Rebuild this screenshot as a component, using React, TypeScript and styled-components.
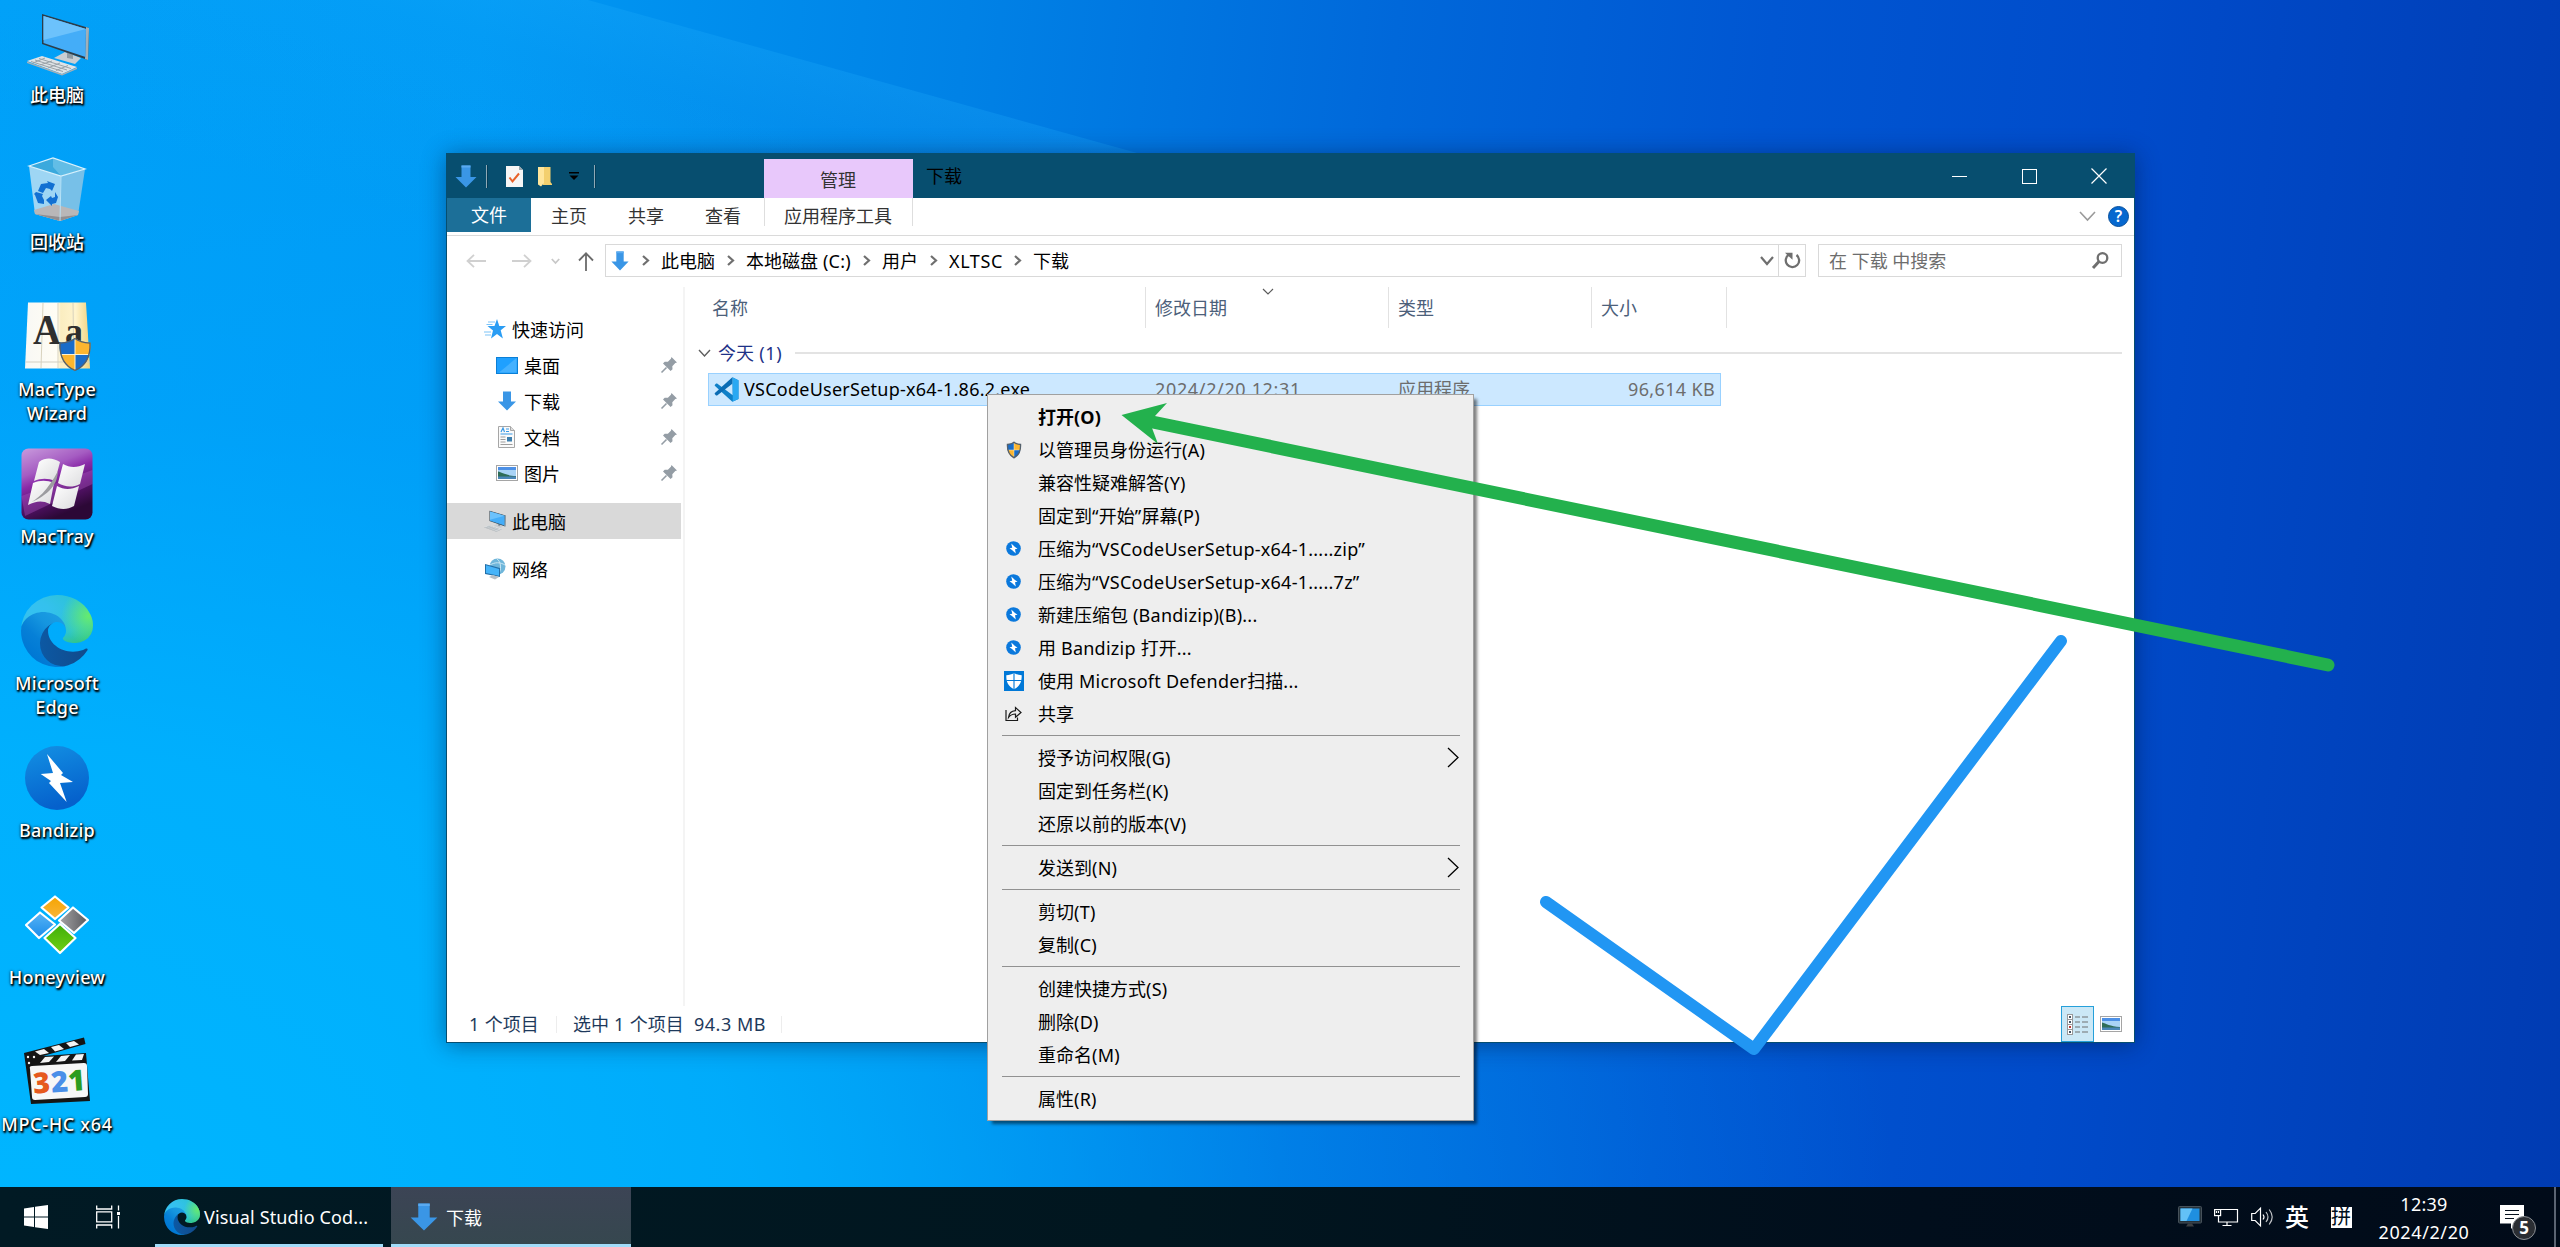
import React from 'react';
import styled, { createGlobalStyle, css } from 'styled-components';

const FONT = `"Noto Sans", "Noto Sans CJK SC", sans-serif`;

const Global = createGlobalStyle`
  html, body { margin: 0; padding: 0; }
  body { font-family: ${FONT}; font-size: 18px; color: #000; overflow: hidden; }
  * { box-sizing: border-box; }
  svg { display: block; flex: none; overflow: visible; }
`;

/* ---------- text ---------- */

const Latin = styled.span<{ $track: number }>`
  letter-spacing: ${(p) => p.$track}px;
`;

function Txt({ children, track = 0.25 }: { children: string; track?: number }) {
  const runs = children.split(/([\u2e80-\u9fff]+)/).filter(Boolean);
  return (
    <>
      {runs.map((r, i) =>
        /[\u2e80-\u9fff]/.test(r) ? <React.Fragment key={i}>{r}</React.Fragment> : <Latin key={i} $track={track}>{r}</Latin>
      )}
    </>
  );
}

/* ---------- desktop ---------- */

const Screen = styled.div`
  display: flex;
  flex-direction: column;
  width: 2560px;
  height: 1247px;
  overflow: hidden;
  background:
    radial-gradient(ellipse 2000px 1300px at 0% 100%, rgba(0, 182, 255, 1) 0%, rgba(0, 180, 255, 0.8) 38%, rgba(0, 170, 255, 0.35) 65%, rgba(0, 160, 255, 0) 95%),
    linear-gradient(96deg, #00a0f8 0%, #0099f4 18%, #0082e6 36%, #0068da 52%, #0056d2 66%, #004bca 80%, #0041bb 92%, #003bb2 100%);
`;

const Workspace = styled.main`
  position: relative;
  flex: 1;
  overflow: hidden;
`;

const Rays = styled.svg`
  position: absolute;
  inset: 0;
`;

const IconColumn = styled.div`
  position: relative;
  display: flex;
  flex-direction: column;
  width: 114px;
`;

const DesktopItem = styled.div`
  display: flex;
  flex-direction: column;
  align-items: center;
  gap: 4px;
  height: 147px;
  padding-top: 7px;
`;

const DesktopLabel = styled.div`
  color: #fff;
  font-weight: 500;
  line-height: 24px;
  text-align: center;
  white-space: pre;
  text-shadow: 1px 1px 2px #000, 1px 2px 2px #000, 0 0 3px rgba(0, 0, 0, 0.6);
`;

const PcIcon = ({ size = 72, box = '0 0 72 72' }: { size?: number; box?: string }) => (
  <svg width={size} height={size} viewBox={box}>
    <polygon points="33,51 44,45 60,51 54,57" fill="#c9ced2" />
    <polygon points="46,42 52,44 52,52 46,51" fill="#8f9ba3" />
    <polygon points="21,7 68,21 67,53 21,37" fill="#2d3d49" />
    <polygon points="65,20 68,21 67,53 64,52" fill="#9fb0ba" />
    <polygon points="22.5,9 65,22 64.5,50 22.5,36" fill="#44adf8" />
    <polygon points="22.5,9 65,22 22.5,33" fill="#6cc2fc" />
    <polygon points="6,54 21,49 56,60 41,67" fill="#dfe3e6" />
    <path d="M10 54.5l32 10M14 53l32 10M18 51.500l32 10M12 56l12-5M19 58l12-4M27 61l12-5M35 63.500l12-5" stroke="#9aa3a9" strokeWidth="1" fill="none" />
    <path d="M6 54.500l35 12.500 15-6.500v1.500l-15 6.500-35-12.500z" fill="#a8b0b5" />
  </svg>
);

const BinIcon = () => (
  <svg width="72" height="72" viewBox="0 0 72 72">
    <polygon points="8,12 40,22 39,67 14,60" fill="#9ed6f4" />
    <polygon points="40,22 64,15 57,61 39,67" fill="#77c0e8" />
    <polygon points="8,12 32,4 64,15 40,22" fill="#3aa9dd" />
    <polygon points="32,4 64,15 40,22 32,13" fill="#62bde6" />
    <polygon points="13,56 33,50 58,57 57,61 39,67 14,60" fill="#b9b7b8" />
    <polygon points="14,60 39,67 57,61 39,63" fill="#918e90" />
    <path d="M8 12l24-8 32 11-24 7z" fill="none" stroke="#d8f1fc" strokeWidth="1.200" />
    <path d="M40 22l-1 45" stroke="#b9e2f6" strokeWidth="1" />
    <g fill="#1170d2">
      <path d="M17 37l3-7 7-1-1-2 8 3-3 7-2-2-4-1-3 5z" />
      <path d="M15 38l7 2-1 2 2 4 0 4-6-1-3-8-1-1z" />
      <path d="M25 46l5-4 1 2 3-1 0-5 3 5-2 6-4 1 0 2z" />
    </g>
  </svg>
);

const UacShield = ({ x = 0, y = 0, w = 32, h = 32 }) => (
  <svg x={x} y={y} width={w} height={h} viewBox="0 0 32 32" preserveAspectRatio="none">
    <defs>
      <clipPath id="uac">
        <path d="M16 0c4 3 9 4 15.500 4.500C32 16 29 26 16 32 3 26 0 16 .5 4.500 7 4 12 3 16 0z" />
      </clipPath>
    </defs>
    <g clipPath="url(#uac)">
      <rect width="16" height="16" fill="#1a6cc8" />
      <rect x="16" width="16" height="16" fill="#fdb62f" />
      <rect y="16" width="16" height="16" fill="#fdb62f" />
      <rect x="16" y="16" width="16" height="16" fill="#1a6cc8" />
      <path d="M16 0v32M0 16h32" stroke="#fff3d0" strokeWidth="1" />
    </g>
    <path d="M16 .5c4 3 9 4 15 4.500C31.500 16 28.500 26 16 31.500 3.500 26 .5 16 1 5 7 4.500 12 3.500 16 .5z" fill="none" stroke="#54606c" strokeWidth={w < 20 ? 3 : 1.3} />
  </svg>
);

const MacTypeIcon = () => (
  <svg width="72" height="72" viewBox="0 0 72 72">
    <defs>
      <linearGradient id="mt" x1="0" x2="1">
        <stop offset="0" stopColor="#f8f8f5" />
        <stop offset=".5" stopColor="#fffdf4" />
        <stop offset=".55" stopColor="#faedc0" />
        <stop offset=".78" stopColor="#fff4cd" />
        <stop offset="1" stopColor="#f0d27d" />
      </linearGradient>
    </defs>
    <polygon points="7,1.500 65,1.500 69,67.500 4,67.500" fill="url(#mt)" />
    <path d="M22 2l-2 65M37 2v65M52 2l1 65" stroke="#d9d3be" strokeWidth="1" />
    <path d="M4.500 61h64" stroke="#d2cfc2" strokeWidth="1" />
    <g fill="#2f2f2f" fontFamily="Liberation Serif, serif" fontWeight="700">
      <text x="12" y="43" fontSize="42" textLength="28" lengthAdjust="spacingAndGlyphs">A</text>
      <text x="44" y="43" fontSize="38" textLength="18" lengthAdjust="spacingAndGlyphs">a</text>
    </g>
    <UacShield x={38} y={37} w={32} h={33} />
  </svg>
);

const MacTrayIcon = () => (
  <svg width="72" height="72" viewBox="0 0 72 72">
    <defs>
      <linearGradient id="tray" x1="0" y1="0" x2=".4" y2="1">
        <stop offset="0" stopColor="#c99bdd" />
        <stop offset=".35" stopColor="#a55cc2" />
        <stop offset=".5" stopColor="#8a2ba8" />
        <stop offset=".72" stopColor="#5a1470" />
        <stop offset="1" stopColor="#2c0836" />
      </linearGradient>
      <linearGradient id="pane" x1="0" y1="0" x2="1" y2="1">
        <stop offset="0" stopColor="#ffffff" />
        <stop offset="1" stopColor="#dcdcde" />
      </linearGradient>
    </defs>
    <rect x=".5" y=".5" width="71" height="71" rx="7" fill="url(#tray)" />
    <path d="M0.500 48L71.500 22v14L4 68z" fill="#b45ccc" opacity=".35" />
    <g fill="url(#pane)">
      <path d="M18 14c7-5 14-4 21 0l-5 19c-7-3-14-3-21 0z" />
      <path d="M42 16c7 4 14 4 22 0l-5 20c-8 4-15 3-22-1z" />
      <path d="M12 35c7-3 14-3 21 0l-4 21c-8-4-14-3-22 1z" />
      <path d="M36 38c7 4 14 4 22 0l-5 20c-7 4-14 4-22 0z" />
    </g>
    <path d="M7 56C16 52 27 42 37 23c-1 9-2 12-8 19C22 49 15 52 7 56z" fill="#9c9ca0" />
  </svg>
);

const EdgeIcon = ({ size = 72, uid }: { size?: number; uid: string }) => (
  <svg width={size} height={size} viewBox="0 0 256 256">
    <defs>
      <linearGradient id={uid + 'a'} x1="63" y1="178" x2="241" y2="178" gradientUnits="userSpaceOnUse">
        <stop offset="0" stopColor="#0c59a4" />
        <stop offset="1" stopColor="#114a8b" />
      </linearGradient>
      <linearGradient id={uid + 'b'} x1="157" y1="100" x2="46" y2="220" gradientUnits="userSpaceOnUse">
        <stop offset="0" stopColor="#1b9de2" />
        <stop offset=".3" stopColor="#1595df" />
        <stop offset=".65" stopColor="#0680d7" />
        <stop offset="1" stopColor="#0078d4" />
      </linearGradient>
      <radialGradient id={uid + 'c'} cx="0" cy="0" r="1" gradientTransform="matrix(-8 170 -350 -20 30 48)" gradientUnits="userSpaceOnUse">
        <stop offset="0" stopColor="#35c1f1" />
        <stop offset=".2" stopColor="#34c1ed" />
        <stop offset=".4" stopColor="#2fc2df" />
        <stop offset=".6" stopColor="#2bc3d2" />
        <stop offset="1" stopColor="#36c752" />
      </radialGradient>
      <radialGradient id={uid + 'd'} cx="240" cy="75" r="97" gradientUnits="userSpaceOnUse">
        <stop offset="0" stopColor="#66eb6e" />
        <stop offset="1" stopColor="#66eb6e" stopOpacity="0" />
      </radialGradient>
    </defs>
    <path fill={`url(#${uid}a)`} d="M231 190.500c-3.400 1.800-6.900 3.400-10.500 4.700a101.900 101.900 0 0 1-35.900 6.500c-47.300 0-88.500-32.500-88.500-74.300a31.500 31.500 0 0 1 16.400-27.300c-42.800 1.800-53.800 46.400-53.800 72.500 0 73.900 68 81.400 82.700 81.400 7.900 0 19.800-2.300 27-4.600l1.300-.4a128.300 128.300 0 0 0 66.600-52.800 4 4 0 0 0-5.300-5.700z" />
    <path fill={`url(#${uid}b)`} d="M105.700 241.400a79.200 79.200 0 0 1-22.700-21.300 80.700 80.700 0 0 1 29.500-120c3.200-1.500 8.500-4.100 15.600-4a32.400 32.400 0 0 1 25.700 13 31.900 31.900 0 0 1 6.300 18.700c0-.2 24.500-79.600-80-79.600-43.900 0-80 41.700-80 78.200a130.200 130.200 0 0 0 12.100 56 128 128 0 0 0 156.400 67.100 75.500 75.500 0 0 1-62.800-8z" />
    <path fill={`url(#${uid}c)`} d="M152.300 148.900c-.8 1-3.300 2.500-3.300 5.700 0 2.600 1.700 5.100 4.700 7.200 14.400 10 41.500 8.700 41.600 8.700a59.600 59.600 0 0 0 30.300-8.300 61.400 61.400 0 0 0 30.400-52.900c.3-22.400-8-37.300-11.300-43.900C223.500 23.900 177.700 0 128 0A128 128 0 0 0 0 126.200c.5-36.500 36.800-66 80-66 3.500 0 23.500.3 42 10a72.600 72.600 0 0 1 30.900 29.300c6.100 10.600 7.200 24.100 7.200 29.500s-2.700 13.300-7.800 19.900z" />
    <path fill={`url(#${uid}d)`} d="M152.300 148.900c-.8 1-3.300 2.500-3.300 5.700 0 2.600 1.700 5.100 4.700 7.200 14.400 10 41.500 8.700 41.600 8.700a59.600 59.600 0 0 0 30.300-8.300 61.400 61.400 0 0 0 30.400-52.900c.3-22.400-8-37.300-11.300-43.900C223.500 23.900 177.700 0 128 0A128 128 0 0 0 0 126.200c.5-36.500 36.800-66 80-66 3.500 0 23.500.3 42 10a72.600 72.600 0 0 1 30.900 29.300c6.100 10.600 7.200 24.100 7.200 29.500s-2.700 13.300-7.800 19.900z" />
  </svg>
);

const BandizipIcon = () => (
  <svg width="72" height="72" viewBox="0 0 72 72">
    <defs>
      <linearGradient id="bz" x1="0" y1="0" x2=".3" y2="1">
        <stop offset="0" stopColor="#1391e4" />
        <stop offset="1" stopColor="#0561cc" />
      </linearGradient>
    </defs>
    <circle cx="36" cy="36" r="32" fill="url(#bz)" />
    <polygon points="26,12 42,31 40,33 52,40 39,41 45.700,60 28,41 30,39 19.700,32 32,31" fill="#fff" />
  </svg>
);

const HoneyviewIcon = () => (
  <svg width="72" height="72" viewBox="0 0 72 72">
    <defs>
      <linearGradient id="ho" x1="0" y1="0" x2="0" y2="1"><stop offset="0" stopColor="#f5a400" /><stop offset="1" stopColor="#f9b53a" /></linearGradient>
      <linearGradient id="hb" x1="0" y1="0" x2="0" y2="1"><stop offset="0" stopColor="#57b4f5" /><stop offset="1" stopColor="#1a8bea" /></linearGradient>
      <linearGradient id="hg" x1="0" y1="0" x2="1" y2="0"><stop offset="0" stopColor="#a4a4a6" /><stop offset="1" stopColor="#59595d" /></linearGradient>
      <linearGradient id="hn" x1="0" y1="0" x2="0" y2="1"><stop offset="0" stopColor="#3fae0a" /><stop offset="1" stopColor="#6fd013" /></linearGradient>
    </defs>
    <g stroke="#fff" strokeWidth="2.200" strokeLinejoin="round">
      <polygon points="34,7.500 47.500,18.500 34,30 20.500,18.500" fill="url(#ho)" />
      <polygon points="19,23.500 34,35.500 18,49 5,36" fill="url(#hb)" />
      <polygon points="52,18.500 67,31 53,44 38,31.500" fill="url(#hg)" />
      <polygon points="39,35 54.500,49 39,64 23.500,49" fill="url(#hn)" />
    </g>
  </svg>
);

const MpcIcon = () => (
  <svg width="72" height="72" viewBox="0 0 72 72">
    <polygon points="3,17 63,1.500 64.500,8 22,20 65,17 69,65 10,68" fill="#151515" />
    <g fill="#f4f4f4">
      <polygon points="14,15.500 23,13 28,17 19,19" />
      <polygon points="30,11 38,9 43,13 34,15.500" />
      <polygon points="45,7 53,5 58,8.500 49,11" />
      <polygon points="24,21 33,20.500 28,26 19,27" />
      <polygon points="40,20 49,19 44,25 35,26" />
      <polygon points="55,18.500 63,18 61,24 51,24.500" />
      <circle cx="7" cy="21" r="1.200" />
      <circle cx="13" cy="21" r="1.200" />
      <circle cx="8" cy="27" r="1.200" />
    </g>
    <path d="M9 33q-1-3 2-3l52-3q3 0 3 3l1 28q0 3-3 3l-50 3q-3 0-3-3z" fill="#f7f7f7" />
    <g fontFamily="Open Sans, sans-serif" fontWeight="800" fontSize="29" transform="rotate(-4 38 46)">
      <text x="12" y="56" fill="#e6591d">3</text>
      <text x="30" y="56" fill="#4a8fe8">2</text>
      <text x="47" y="56" fill="#2c9c1f">1</text>
    </g>
  </svg>
);

/* ---------- explorer window ---------- */

const Explorer = styled.section`
  position: absolute;
  left: 446px;
  top: 153px;
  width: 1689px;
  height: 890px;
  display: flex;
  flex-direction: column;
  background: #fff;
  border: 1px solid #064e70;
  box-shadow: 0 2px 22px rgba(0, 20, 60, 0.45);
`;

const TitleBar = styled.header`
  display: flex;
  height: 44px;
  background: #074e6f;
`;

const QuickAccess = styled.div`
  display: flex;
  align-items: center;
  width: 317px;
  padding-left: 8px;
`;

const ToolDivider = styled.i<{ $ml: number; $mr: number }>`
  width: 2px;
  height: 23px;
  margin: 0 ${(p) => p.$mr}px 0 ${(p) => p.$ml}px;
  border-left: 1px solid #8fa9b6;
  border-right: 1px solid #033c57;
`;

const ToolGap = styled.span<{ $w: number }>`
  width: ${(p) => p.$w}px;
`;

const ContextTab = styled.div`
  align-self: flex-end;
  width: 149px;
  height: 39px;
  padding-right: 1px;
  line-height: 42px;
  text-align: center;
  background: #e8c8fb;
  color: #333;
`;

const WindowTitle = styled.div`
  flex: 1;
  padding-left: 13px;
  line-height: 44px;
`;

const Caption = styled.div`
  display: flex;
  height: 44px;
`;

const CaptionButton = styled.div`
  display: flex;
  align-items: center;
  justify-content: center;
  width: 70px;
  height: 44px;
`;

const Ribbon = styled.nav`
  display: flex;
  height: 38px;
  padding-right: 5px;
  border-bottom: 1px solid #dadada;
`;

const RibbonTab = styled.div<{ $w: number; $kind?: 'file' | 'tool' }>`
  width: ${(p) => p.$w}px;
  height: 34px;
  line-height: 37px;
  text-align: center;
  color: #333;
  ${(p) =>
    p.$kind === 'file' &&
    css`
      background: #1c6f98;
      color: #fff;
      line-height: 35px;
    `}
  ${(p) =>
    p.$kind === 'tool' &&
    css`
      height: 28px;
      padding-right: 1px;
      border-left: 1px solid #dedede;
      border-right: 1px solid #dedede;
    `}
`;

const RibbonRight = styled.div`
  display: flex;
  align-items: center;
  gap: 12px;
  margin-left: auto;
  height: 36px;
`;

const HelpBadge = styled.div`
  width: 21px;
  height: 21px;
  border-radius: 50%;
  border: 1px solid #074f9c;
  background: #0668cf;
  color: #fff;
  font-size: 16px;
  font-weight: 600;
  line-height: 19px;
  text-align: center;
`;

const AddressRow = styled.div`
  display: flex;
  height: 51px;
  padding: 8px 12px 0 19px;
`;

const NavArrows = styled.div`
  display: flex;
  align-items: center;
  width: 139px;
  height: 34px;
`;

const AddressBox = styled.div`
  display: flex;
  align-items: center;
  width: 1201px;
  height: 33px;
  padding-left: 5px;
  border: 1px solid #d9d9d9;
`;

const Crumb = styled.span<{ $w: number }>`
  width: ${(p) => p.$w}px;
  white-space: nowrap;
  line-height: 32px;
`;

const CrumbChevron = styled.span`
  width: 32px;
  display: flex;
  justify-content: center;
`;

const AddressTail = styled.div`
  display: flex;
  align-items: center;
  margin-left: auto;
  height: 31px;
`;

const RefreshCell = styled.div`
  display: flex;
  align-items: center;
  justify-content: center;
  width: 27px;
  height: 31px;
  margin-left: 4px;
  border-left: 1px solid #d9d9d9;
`;

const SearchBox = styled.div`
  display: flex;
  align-items: center;
  justify-content: space-between;
  flex: 1;
  height: 33px;
  margin-left: 12px;
  padding: 0 12px 0 10px;
  border: 1px solid #d9d9d9;
  color: #6d6d6d;
  line-height: 32px;
`;

const Body = styled.div`
  display: flex;
  flex: 1;
`;

const Tree = styled.aside`
  display: flex;
  flex-direction: column;
  gap: 12px;
  width: 238px;
  padding-top: 24px;
  border-right: 2px solid #f4f4f4;
`;

const TreeGroup = styled.div<{ $on?: boolean }>`
  width: 234px;
  background: ${(p) => (p.$on ? '#d9d9d9' : 'transparent')};
`;

const TreeRow = styled.div<{ $indent: number }>`
  display: flex;
  align-items: center;
  gap: 6px;
  height: 36px;
  padding-left: ${(p) => p.$indent}px;
  padding-right: 4px;
`;

const PinSlot = styled.span`
  margin-left: auto;
`;

const Files = styled.div`
  flex: 1;
  padding-right: 12px;
`;

const Columns = styled.div`
  display: flex;
  height: 41px;
  color: #4c607a;
  line-height: 42px;
`;

const Column = styled.div<{ $w: number; $pl: number }>`
  position: relative;
  width: ${(p) => p.$w}px;
  padding-left: ${(p) => p.$pl}px;
  border-right: 1px solid #e2e2e2;
`;

const SortMark = styled.span`
  position: absolute;
  left: 116px;
  top: 1px;
`;

const GroupHeader = styled.div`
  display: flex;
  align-items: center;
  height: 45px;
  padding: 5px 0 0 13px;
  color: #1e3287;
`;

const GroupName = styled.span`
  margin: 0 12px 0 7px;
  width: 65px;
  white-space: nowrap;
  line-height: 40px;
`;

const GroupLine = styled.i`
  flex: 1;
  height: 2px;
  background: #e3e3e3;
`;

const FileRow = styled.div`
  display: flex;
  align-items: center;
  width: 1013px;
  height: 33px;
  margin-left: 23px;
  padding: 0 5px;
  border: 1px solid #99d1ff;
  background: #cce8ff;
  white-space: nowrap;
  line-height: 31px;
`;

const Cell = styled.span<{ $w?: number; $dim?: boolean; $end?: boolean }>`
  ${(p) => (p.$w ? `width: ${p.$w}px;` : 'flex: 1;')}
  color: ${(p) => (p.$dim ? '#6d6d6d' : '#000')};
  text-align: ${(p) => (p.$end ? 'right' : 'left')};
`;

const StatusBar = styled.footer`
  display: flex;
  align-items: center;
  height: 36px;
  padding: 0 12px 0 22px;
  color: #1e395b;
  line-height: 36px;
  white-space: pre;
`;

const StatusPart = styled.span<{ $w: number }>`
  width: ${(p) => p.$w}px;
`;

const StatusSep = styled.i<{ $mr: number }>`
  width: 1px;
  height: 17px;
  margin-right: ${(p) => p.$mr}px;
  background: #ededed;
`;

const ViewButtons = styled.div`
  display: flex;
  align-items: center;
  gap: 6px;
  margin-left: auto;
`;

const ViewOn = styled.div`
  display: flex;
  align-items: center;
  justify-content: center;
  width: 33px;
  height: 36px;
  border: 1px solid #26a0da;
  background: #cbe8f6;
`;

const DownArrow = ({ w, h }: { w: number; h: number }) => (
  <svg width={w} height={h} viewBox="0 0 22 23" preserveAspectRatio="none">
    <path d="M6.500 .5h9v11.500h6L11 22.500 .5 12h6z" fill="#3a96e6" />
    <path d="M6.500 .5h9v2h-9z" fill="#5aaaf0" />
  </svg>
);

const Chevron = ({ w = 7, h = 11, dir = 'right', color = '#6f6f6f', sw = 2.2 }: { w?: number; h?: number; dir?: 'right' | 'down'; color?: string; sw?: number }) => (
  <svg width={w} height={h} viewBox={`0 0 ${w} ${h}`}>
    <path
      d={dir === 'right' ? `M1 1L${w - 1} ${h / 2}L1 ${h - 1}` : `M1 1L${w / 2} ${h - 1}L${w - 1} 1`}
      fill="none"
      stroke={color}
      strokeWidth={sw}
    />
  </svg>
);

const PictureIcon = ({ w = 22, h = 16 }) => (
  <svg width={w} height={h} viewBox="0 0 22 16" preserveAspectRatio="none">
    <rect x=".5" y=".5" width="21" height="15" fill="#fff" stroke="#a5a5a5" />
    <rect x="2" y="2" width="18" height="12" fill="#a9d3f6" />
    <rect x="2" y="2" width="18" height="3" fill="#4d90e6" />
    <path d="M2 6.500c4 1 8 4 18 4.500v1H2z" fill="#2f6d57" />
    <rect x="2" y="11.500" width="18" height="2.500" fill="#4a86b8" />
  </svg>
);

const StarIcon = () => (
  <svg width="22" height="20" viewBox="0 0 22 20">
    <path d="M13 0l2.300 7H22l-5.300 4.300 2.200 8.200L13 15 7 19.500l2-8L3.500 7h7z" fill="#2a9df4" />
    <path d="M4 3h7M2.500 5.500h6M0 13h7M1 16h6" stroke="#7cc4f8" strokeWidth="1.200" />
  </svg>
);

const DesktopFolder = () => (
  <svg width="22" height="17" viewBox="0 0 22 17">
    <rect x=".5" y=".5" width="21" height="16" fill="#1fa0ff" stroke="#0b7fd6" />
    <path d="M20.500 1v14.500H3z" fill="#45b1ff" />
  </svg>
);

const DocIcon = () => (
  <svg width="22" height="22" viewBox="0 0 22 22">
    <path d="M2.500 .5h12l4 4v17h-16z" fill="#fafafa" stroke="#a6a6a6" />
    <path d="M14.500 .5v4h4" fill="#ddd" stroke="#a6a6a6" />
    <path d="M5 6l2-4 1.500 4M10 3h3M10 5.500h3M4.500 8h12" stroke="#3b9ae6" strokeWidth="1.200" fill="none" />
    <path d="M4.500 11h5M4.500 13.500h5M4.500 16h5M4.500 18.500h12" stroke="#9d9d9d" strokeWidth="1" />
    <rect x="11" y="11" width="5" height="4.500" fill="#3d7fae" />
  </svg>
);

const NetworkIcon = () => (
  <svg width="22" height="22" viewBox="0 0 22 22">
    <circle cx="13.500" cy="8.500" r="8" fill="#6fb6da" />
    <path d="M13 1c4 2 5 12 1 15M6 7c5-3 10-3 15 0" stroke="#c9e6f3" fill="none" />
    <polygon points="1,6 16,10 16,19 1,16" fill="#236fa8" />
    <polygon points="2,7.300 15,10.900 15,17.800 2,15" fill="#46b4f9" />
    <path d="M5 19l4-2 6 2-4 2.500z" fill="#b8c0c6" />
  </svg>
);

const PinIcon = () => (
  <svg width="16" height="16" viewBox="0 0 16 16">
    <path d="M10.500 0l5.500 5.500-1.700.6-3 3.200.2 3L9.600 14 2 6.400l1.700-1.700 3.200.1 3-3z" fill="#949da5" />
    <path d="M5.500 10.500L.5 15.500" stroke="#949da5" strokeWidth="1.600" />
  </svg>
);

const VsCodeIcon = () => (
  <svg width="25" height="25" viewBox="0 0 24 24">
    <path d="M17.600 .2L23.500 3v18l-5.900 2.800L1.500 9.200 .5 8l1.500-1.700h1L18 17.600z" fill="#0f80c8" />
    <path d="M17.600 .2v6.200L3 17.700H2L.5 16l.9-1.200z" fill="#0a6cb4" />
    <path d="M17.600 .2L23.500 3v18l-5.900 2.800c.3-.2.400-.5.400-.8V1c0-.3-.1-.6-.4-.8z" fill="#2aa8f2" />
  </svg>
);

/* ---------- context menu ---------- */

const Menu = styled.ul`
  position: absolute;
  left: 987px;
  top: 394px;
  width: 487px;
  height: 727px;
  margin: 0;
  padding: 5px 4px;
  list-style: none;
  background: #eee;
  border: 1px solid #a0a0a0;
  box-shadow: 4px 4px 3px -1px rgba(0, 0, 0, 0.5);
`;

const MenuItem = styled.li<{ $strong?: boolean }>`
  display: flex;
  align-items: center;
  height: 33px;
  padding-right: 10px;
  line-height: 34px;
  white-space: nowrap;
  font-weight: ${(p) => (p.$strong ? 700 : 400)};
`;

const MenuIcon = styled.span`
  display: flex;
  align-items: center;
  justify-content: center;
  width: 46px;
  padding-right: 3px;
`;

const MenuText = styled.span`
  flex: 1;
`;

const MenuSep = styled.li`
  height: 1px;
  margin: 5px 9px 5px 10px;
  background: #919191;
`;

const MiniBandizip = () => (
  <svg width="15" height="15" viewBox="0 0 15 15">
    <circle cx="7.500" cy="7.500" r="7.300" fill="#0a78dc" />
    <polygon points="5.300,2.500 9,6 11.500,7.800 9,8.300 9.800,12.500 6,9 3.500,7.200 6.200,6.700" fill="#fff" />
  </svg>
);

const DefenderIcon = () => (
  <svg width="20" height="20" viewBox="0 0 20 20">
    <rect width="20" height="20" fill="#0078d7" />
    <path d="M10 2c2.300 1.500 4.700 2 7.700 2.200C17.800 11 16 15 10 18.300 4 15 2.200 11 2.300 4.200 5.300 4 7.700 3.500 10 2z" fill="#fff" />
    <path d="M10 2v16.500M2.300 9.500h15.500" stroke="#0078d7" strokeWidth="1.100" />
  </svg>
);

const ShareIcon = () => (
  <svg width="17" height="16" viewBox="0 0 17 16" fill="none" stroke="#1a1a1a" strokeWidth="1.200">
    <path d="M1 4v10.500h11.500v-3" />
    <path d="M3.500 11.500C4 7 6.500 5 10.500 4.700V1.500L16 6.500l-5.500 4.800V8C7.500 8 5.500 8.800 3.500 11.500z" />
  </svg>
);

type Entry = { text: string; icon?: React.ReactNode; sub?: boolean; strong?: boolean };

const menuGroups: Entry[][] = [
  [
    { text: '打开(O)', strong: true },
    { text: '以管理员身份运行(A)', icon: <UacShield w={14} h={16} /> },
    { text: '兼容性疑难解答(Y)' },
    { text: '固定到“开始”屏幕(P)' },
    { text: '压缩为“VSCodeUserSetup-x64-1.....zip”', icon: <MiniBandizip /> },
    { text: '压缩为“VSCodeUserSetup-x64-1.....7z”', icon: <MiniBandizip /> },
    { text: '新建压缩包 (Bandizip)(B)...', icon: <MiniBandizip /> },
    { text: '用 Bandizip 打开...', icon: <MiniBandizip /> },
    { text: '使用 Microsoft Defender扫描...', icon: <DefenderIcon /> },
    { text: '共享', icon: <ShareIcon /> },
  ],
  [{ text: '授予访问权限(G)', sub: true }, { text: '固定到任务栏(K)' }, { text: '还原以前的版本(V)' }],
  [{ text: '发送到(N)', sub: true }],
  [{ text: '剪切(T)' }, { text: '复制(C)' }],
  [{ text: '创建快捷方式(S)' }, { text: '删除(D)' }, { text: '重命名(M)' }],
  [{ text: '属性(R)' }],
];

const Annotation = styled.svg`
  position: absolute;
  inset: 0;
`;

/* ---------- taskbar ---------- */

const Taskbar = styled.footer`
  display: flex;
  height: 60px;
  background: linear-gradient(90deg, #011a24 0%, #01161f 45%, #010e1c 75%, #010b19 100%);
  color: #fff;
`;

const TaskButton = styled.div<{ $w: number; $pl: number }>`
  display: flex;
  align-items: center;
  width: ${(p) => p.$w}px;
  padding-left: ${(p) => p.$pl}px;
`;

const TaskApp = styled.div<{ $w: number; $active?: boolean; $gap: number; $pl: number }>`
  display: flex;
  align-items: center;
  gap: ${(p) => p.$gap}px;
  width: ${(p) => p.$w}px;
  height: 60px;
  margin-right: 8px;
  padding: 2px 0 0 ${(p) => p.$pl}px;
  border-bottom: 3px solid #a2dcf9;
  background: ${(p) => (p.$active ? 'linear-gradient(#3c4455, #36474f)' : 'transparent')};
  white-space: nowrap;
`;

const Tray = styled.div`
  display: flex;
  align-items: center;
  margin-left: auto;
`;

const TraySlot = styled.div<{ $w: number }>`
  display: flex;
  align-items: center;
  justify-content: center;
  width: ${(p) => p.$w}px;
`;

const ImeMode = styled(TraySlot)`
  font-size: 24px;
  font-weight: 500;
  line-height: 30px;
`;

const ImeSlot = styled(TraySlot)`
  margin-right: 4px;
`;

const ImeBox = styled.span`
  width: 21px;
  height: 21px;
  background: #fff;
  color: #00101c;
  font-size: 20px;
  line-height: 20px;
  text-align: center;
`;

const Clock = styled.div`
  display: flex;
  flex-direction: column;
  align-items: center;
  width: 104px;
  padding-top: 2px;
  line-height: 28px;
`;

const Notice = styled.div`
  position: relative;
  width: 58px;
  padding-left: 24px;
`;

const NoticeCount = styled.span`
  position: absolute;
  left: 36px;
  top: 11px;
  width: 24px;
  height: 24px;
  border: 1px solid #8b8f94;
  border-radius: 50%;
  background: #2b2e33;
  font-size: 17px;
  font-weight: 700;
  line-height: 22px;
  text-align: center;
`;

const PeekStrip = styled.i`
  width: 2px;
  height: 60px;
  margin: 0 4px 0 20px;
  background: #5b6472;
`;

/* ---------- app ---------- */

const desktopItems = [
  { label: '此电脑', icon: <PcIcon /> },
  { label: '回收站', icon: <BinIcon /> },
  { label: 'MacType\nWizard', icon: <MacTypeIcon /> },
  { label: 'MacTray', icon: <MacTrayIcon /> },
  { label: 'Microsoft\nEdge', icon: <EdgeIcon uid="ed" /> },
  { label: 'Bandizip', icon: <BandizipIcon /> },
  { label: 'Honeyview', icon: <HoneyviewIcon /> },
  { label: 'MPC-HC x64', icon: <MpcIcon />, track: 0.7 },
];

const crumbs = [
  { text: '此电脑', w: 53 },
  { text: '本地磁盘 (C:)', w: 104 },
  { text: '用户', w: 35 },
  { text: 'XLTSC', w: 52, track: 0.6 },
  { text: '下载', w: 40 },
];

const quickFolders = [
  { text: '桌面', icon: <DesktopFolder /> },
  { text: '下载', icon: <svg width="22" height="20" viewBox="0 0 22 20"><path d="M7 .5h8v10h5L11 19.500 2 10.500h5z" fill="#3a96e6" /></svg> },
  { text: '文档', icon: <DocIcon /> },
  { text: '图片', icon: <PictureIcon /> },
];

export default function App() {
  return (
    <Screen>
      <Global />
      <Workspace>
        <Rays width="2560" height="1187">
          <defs>
            <linearGradient id="ray" x1="588" y1="0" x2="518" y2="252" gradientUnits="userSpaceOnUse">
              <stop offset="0" stopColor="#25b4ff" stopOpacity=".22" />
              <stop offset=".25" stopColor="#25b4ff" stopOpacity=".1" />
              <stop offset="1" stopColor="#25b4ff" stopOpacity="0" />
            </linearGradient>
          </defs>
          <path d="M588 0L1180 165V600H0V0z" fill="url(#ray)" />
        </Rays>

        <IconColumn>
          {desktopItems.map((d) => (
            <DesktopItem key={d.label}>
              {d.icon}
              <DesktopLabel><Txt track={d.track}>{d.label}</Txt></DesktopLabel>
            </DesktopItem>
          ))}
        </IconColumn>

        <Explorer>
          <TitleBar>
            <QuickAccess>
              <DownArrow w={22} h={23} />
              <ToolDivider $ml={9} $mr={18} />
              <svg width="17" height="21" viewBox="0 0 17 21">
                <path d="M0 0h13l4 4v17H0z" fill="#f6f6f6" />
                <path d="M13 0l4 4h-4z" fill="#9aa7ae" />
                <path d="M3.500 11.500l3 4 6.500-8" fill="none" stroke="#e8622a" strokeWidth="2" />
              </svg>
              <ToolGap $w={15} />
              <svg width="14" height="21" viewBox="0 0 14 21">
                <path d="M3 1h9.500v15l1.500 2v1H5z" fill="#f3cf6e" />
                <path d="M0 1h6v16l-3 3.500-3-2z" fill="#ffe59b" />
              </svg>
              <ToolGap $w={17} />
              <svg width="10" height="8" viewBox="0 0 10 8">
                <rect width="10" height="1.500" />
                <path d="M.5 3.500h9L5 8z" />
              </svg>
              <ToolDivider $ml={15} $mr={0} />
            </QuickAccess>
            <ContextTab>管理</ContextTab>
            <WindowTitle>下载</WindowTitle>
            <Caption>
              <CaptionButton>
                <svg width="15" height="15"><path d="M0 7.500h15" stroke="#fff" strokeWidth="1" /></svg>
              </CaptionButton>
              <CaptionButton>
                <svg width="15" height="15"><rect x=".5" y=".5" width="14" height="14" fill="none" stroke="#fff" /></svg>
              </CaptionButton>
              <CaptionButton>
                <svg width="16" height="16"><path d="M.5 .5l15 15M15.500 .5l-15 15" stroke="#fff" strokeWidth="1.200" /></svg>
              </CaptionButton>
            </Caption>
          </TitleBar>

          <Ribbon>
            <RibbonTab $w={84} $kind="file">文件</RibbonTab>
            <RibbonTab $w={76}>主页</RibbonTab>
            <RibbonTab $w={78}>共享</RibbonTab>
            <RibbonTab $w={76}>查看</RibbonTab>
            <ToolGap $w={3} />
            <RibbonTab $w={149} $kind="tool">应用程序工具</RibbonTab>
            <RibbonRight>
              <Chevron w={17} h={10} dir="down" color="#9a9a9a" sw={1.6} />
              <HelpBadge>?</HelpBadge>
            </RibbonRight>
          </Ribbon>

          <AddressRow>
            <NavArrows>
              <svg width="20" height="14" viewBox="0 0 20 14"><path d="M20 7H1.500M8 .8L1.500 7 8 13.200" fill="none" stroke="#d0d0d0" strokeWidth="1.800" /></svg>
              <ToolGap $w={26} />
              <svg width="20" height="14" viewBox="0 0 20 14"><path d="M0 7h18.500M12 .8L18.500 7 12 13.200" fill="none" stroke="#d0d0d0" strokeWidth="1.800" /></svg>
              <ToolGap $w={19} />
              <svg width="9" height="7" viewBox="0 0 9 7"><path d="M.8 1l3.700 4L8.200 1" fill="none" stroke="#c8c8c8" strokeWidth="1.800" /></svg>
              <ToolGap $w={18} />
              <svg width="16" height="19" viewBox="0 0 16 19"><path d="M8 19V1.500M1 8.500L8 1.300l7 7.200" fill="none" stroke="#6b6b6b" strokeWidth="1.800" /></svg>
            </NavArrows>
            <AddressBox>
              <DownArrow w={18} h={20} />
              {crumbs.map((c) => (
                <React.Fragment key={c.text}>
                  <CrumbChevron><Chevron /></CrumbChevron>
                  <Crumb $w={c.w}><Txt track={c.track}>{c.text}</Txt></Crumb>
                </React.Fragment>
              ))}
              <AddressTail>
                <Chevron w={14} h={9} dir="down" color="#6f6f6f" sw={2.2} />
                <RefreshCell>
                  <svg width="17" height="17" viewBox="0 0 17 17">
                    <path d="M12.500 3A6.700 6.700 0 1 1 5 2.600" fill="none" stroke="#6f6f6f" strokeWidth="2.300" />
                    <path d="M1 .8h7.500v7z" fill="#6f6f6f" />
                  </svg>
                </RefreshCell>
              </AddressTail>
            </AddressBox>
            <SearchBox>
              <span>在 下载 中搜索</span>
              <svg width="17" height="17" viewBox="0 0 17 17">
                <circle cx="10.500" cy="6" r="4.800" fill="none" stroke="#6f6f6f" strokeWidth="2.300" />
                <path d="M7 9.500L1 16" stroke="#6f6f6f" strokeWidth="3" />
              </svg>
            </SearchBox>
          </AddressRow>

          <Body>
            <Tree>
              <TreeGroup>
                <TreeRow $indent={37}><StarIcon />快速访问</TreeRow>
                {quickFolders.map((f) => (
                  <TreeRow key={f.text} $indent={49}>
                    {f.icon}
                    {f.text}
                    <PinSlot><PinIcon /></PinSlot>
                  </TreeRow>
                ))}
              </TreeGroup>
              <TreeGroup $on>
                <TreeRow $indent={37}><PcIcon size={22} box="5 5 64 64" />此电脑</TreeRow>
              </TreeGroup>
              <TreeGroup>
                <TreeRow $indent={37}><NetworkIcon />网络</TreeRow>
              </TreeGroup>
            </Tree>
            <Files>
              <Columns>
                <Column $w={461} $pl={27}>名称</Column>
                <Column $w={243} $pl={9}>
                  修改日期
                  <SortMark><Chevron w={12} h={7} dir="down" color="#5a5a5a" sw={1.2} /></SortMark>
                </Column>
                <Column $w={203} $pl={9}>类型</Column>
                <Column $w={135} $pl={9}>大小</Column>
              </Columns>
              <GroupHeader>
                <Chevron w={13} h={8} dir="down" color="#5e5e5e" sw={1.4} />
                <GroupName><Txt track={0.6}>今天 (1)</Txt></GroupName>
                <GroupLine />
              </GroupHeader>
              <FileRow>
                <Cell $w={30}><VsCodeIcon /></Cell>
                <Cell $w={411}><Txt>VSCodeUserSetup-x64-1.86.2.exe</Txt></Cell>
                <Cell $w={243} $dim><Txt track={0.65}>2024/2/20 12:31</Txt></Cell>
                <Cell $w={150} $dim>应用程序</Cell>
                <Cell $dim $end><Txt track={0.35}>96,614 KB</Txt></Cell>
              </FileRow>
            </Files>
          </Body>

          <StatusBar>
            <StatusPart $w={87}><Txt track={0.4}>1 个项目</Txt></StatusPart>
            <StatusSep $mr={16} />
            <StatusPart $w={121}><Txt track={0.4}>选中 1 个项目</Txt></StatusPart>
            <StatusPart $w={87}><Txt track={0.5}>94.3 MB</Txt></StatusPart>
            <StatusSep $mr={0} />
            <ViewButtons>
              <ViewOn>
                <svg width="22" height="21" viewBox="0 0 22 21">
                  {[0, 5, 10, 15].map((y) => (
                    <g key={y}>
                      <rect x=".5" y={y + 0.5} width="5" height="5" fill="#fff" stroke="#999" />
                      <rect x="2" y={y + 2} width="2" height="2" fill={y === 10 ? '#b33' : '#456'} />
                      <path d={`M8 ${y + 3}h5M15 ${y + 3}h6`} stroke="#707070" strokeWidth="1.200" />
                    </g>
                  ))}
                </svg>
              </ViewOn>
              <PictureIcon />
            </ViewButtons>
          </StatusBar>
        </Explorer>

        <Menu>
          {menuGroups.map((group, gi) => (
            <React.Fragment key={gi}>
              {gi > 0 && <MenuSep />}
              {group.map((e) => (
                <MenuItem key={e.text} $strong={e.strong}>
                  <MenuIcon>{e.icon}</MenuIcon>
                  <MenuText><Txt>{e.text}</Txt></MenuText>
                  {e.sub && <Chevron w={12} h={21} color="#000" sw={1.3} />}
                </MenuItem>
              ))}
            </React.Fragment>
          ))}
        </Menu>

        <Annotation width="2560" height="1187">
          <path d="M1546 902L1754 1049L2061 641" fill="none" stroke="#2196f3" strokeWidth="12" strokeLinecap="round" strokeLinejoin="round" />
          <path d="M1150 421.500L2328 665" stroke="#23b14d" strokeWidth="13" strokeLinecap="round" />
          <path d="M1121.500 415L1167 403 1155 416 1152 428 1158 444z" fill="#23b14d" />
        </Annotation>
      </Workspace>

      <Taskbar>
        <TaskButton $w={72} $pl={24}>
          <svg width="24" height="24" viewBox="0 0 24 24"><path d="M0 3.400L10 2v9.500H0zM11 1.800L24 0v11.500H11zM0 12.500h10V22L0 20.600zM11 12.500h13V24l-13-1.800z" fill="#fff" /></svg>
        </TaskButton>
        <TaskButton $w={83} $pl={24}>
          <svg width="24" height="24" viewBox="0 0 24 24" fill="none" stroke="#fff" strokeWidth="1.300">
            <path d="M.7 .5v3.500h15V.5M.7 6.800h15v10H.7zM.7 23.500V20h15v3.500M22.500 .5v5M22.500 11v12.500" />
            <rect x="21" y="7" width="3" height="3" fill="#fff" stroke="none" />
          </svg>
        </TaskButton>
        <TaskApp $w={228} $pl={9} $gap={4}>
          <EdgeIcon size={36} uid="et" />
          <Txt track={0.15}>Visual Studio Cod...</Txt>
        </TaskApp>
        <TaskApp $w={240} $pl={19} $gap={8} $active>
          <DownArrow w={28} h={28} />
          下载
        </TaskApp>

        <Tray>
          <TraySlot $w={36}>
            <svg width="24" height="22" viewBox="0 0 24 22">
              <rect x=".5" y=".5" width="23" height="16.500" rx="1" fill="#26323a" stroke="#46515a" />
              <rect x="2.500" y="2.500" width="19" height="12.500" fill="#1f8fe0" />
              <path d="M2.500 2.500h12l-6 12.500h-6z" fill="#63c1f7" />
              <path d="M8 20.500h8l-2-3h-4z" fill="#3c3f42" />
            </svg>
          </TraySlot>
          <TraySlot $w={36}>
            <svg width="24" height="19" viewBox="0 0 24 19" fill="none" stroke="#fff" strokeWidth="1.200">
              <path d="M7 1.500h16.500V14H4.500V7.500M13 14v3.500M8.500 17.500h9" />
              <rect x=".6" y="1.600" width="6" height="6" fill="#020f1b" />
              <path d="M2.500 3v2M4.500 3v2" />
            </svg>
          </TraySlot>
          <TraySlot $w={36}>
            <svg width="23" height="20" viewBox="0 0 23 20" fill="none" stroke="#fff" strokeWidth="1.200">
              <path d="M.7 6.500h3.500L9.500 1.200v17.600L4.200 13.500H.7z" />
              <path d="M12 7.500q2 2.500 0 5" />
              <path d="M15 5q4 5 0 10M18.200 2.500q6 7.500 0 15" opacity=".75" />
            </svg>
          </TraySlot>
          <ImeMode $w={34}>英</ImeMode>
          <ImeSlot $w={54}><ImeBox>拼</ImeBox></ImeSlot>
          <Clock>
            <span><Txt>12:39</Txt></span>
            <span><Txt track={0.6}>2024/2/20</Txt></span>
          </Clock>
          <Notice>
            <svg width="24" height="24" viewBox="0 0 24 24">
              <path d="M0 0h24v18.500h-8L11 24v-5.500H0z" fill="#fff" />
              <path d="M5 5.500h14M5 9.500h14M5 13.500h9" stroke="#07121e" strokeWidth="1.200" />
            </svg>
            <NoticeCount>5</NoticeCount>
          </Notice>
        </Tray>
        <PeekStrip />
      </Taskbar>
    </Screen>
  );
}
